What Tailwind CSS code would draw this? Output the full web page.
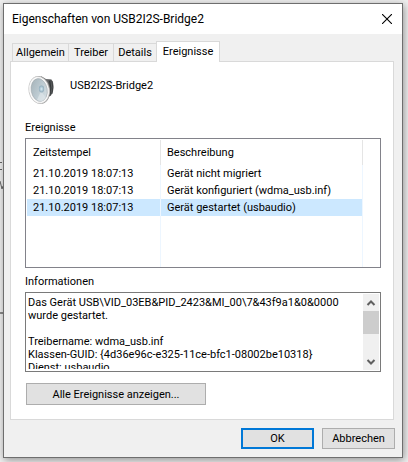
<!DOCTYPE html>
<html lang="de">
<head>
<meta charset="utf-8">
<meta name="viewport" content="width=device-width, initial-scale=1">
<title>Eigenschaften von USB2I2S-Bridge2</title>
<script src="https://cdn.jsdelivr.net/npm/@tailwindcss/browser@4"></script>
</head>
<body class="relative min-h-screen overflow-hidden bg-[#f0f0f0] pt-[3px] pr-[5px] pb-1 pl-[3px] font-[Roboto,'Liberation_Sans',sans-serif] text-[11px] leading-[13px] text-black">
  <!-- page content showing past the dialog's left edge -->
  <svg class="absolute top-[160px] left-0" width="3" height="156" viewBox="0 0 3 156" fill="none" stroke="#666" aria-hidden="true">
    <path d="M0 2.5h2M0 9.5h2M0 21l2 8 1-3"/>
    <path d="M0 153h3" stroke="#8a8a8a" stroke-width="2"/>
  </svg>

  <main role="dialog" aria-labelledby="title" class="relative flex flex-col border border-[#6e6e6e] bg-[#f0f0f0] shadow-[1px_2px_8px_rgba(0,0,0,0.4)]">
    <header class="flex h-[30px] items-center justify-between bg-white pr-[10px] pl-2">
      <h1 id="title" class="text-[12px] leading-4">Eigenschaften von USB2I2S-Bridge2</h1>
      <button type="button" aria-label="Schließen" class="flex size-[10px] items-center justify-center">
        <svg width="10" height="10" viewBox="0 0 10 10" stroke="#000" stroke-width="1.1"><path d="M0 0l10 10M10 0L0 10"/></svg>
      </button>
    </header>

    <div class="px-2 pt-[7px] pl-[6px]">
      <nav role="tablist" class="flex items-end pl-[2px]">
        <button role="tab" type="button" class="h-[18px] w-[57px] border border-b-0 border-[#d9d9d9]">Allgemein</button>
        <button role="tab" type="button" class="h-[18px] w-[45px] border-t border-r border-[#d9d9d9]">Treiber</button>
        <button role="tab" type="button" class="h-[18px] w-[42px] border-t border-[#d9d9d9]">Details</button>
        <button role="tab" type="button" aria-selected="true" class="relative -mb-px h-[21px] w-16 border border-b-0 border-[#d9d9d9] bg-white pb-[2px]">Ereignisse</button>
      </nav>

      <section role="tabpanel" class="border border-[#d9d9d9] bg-white pt-[10px] pr-3 pb-[14px] pl-[14px]">
        <div class="flex h-8 items-start">
          <svg class="shrink-0" width="32" height="32" viewBox="0 0 32 32" aria-hidden="true">
            <defs>
              <linearGradient id="cone" x1="0" y1="0" x2="1" y2="1"><stop offset="0" stop-color="#a3b0b6"/><stop offset=".5" stop-color="#bccad1"/><stop offset="1" stop-color="#dce5e9"/></linearGradient>
              <linearGradient id="body" x1="0" y1="0" x2="1" y2="0"><stop offset="0" stop-color="#999"/><stop offset=".75" stop-color="#4a4d4f"/><stop offset="1" stop-color="#777"/></linearGradient>
              <radialGradient id="cap"><stop offset="0" stop-color="#d9ecf5"/><stop offset="1" stop-color="#8fabba"/></radialGradient>
            </defs>
            <path d="M16 4l5 3 5.500 .5q2.500 3 2 9 0 4-2.500 7l-3.500 2-4 3z" fill="url(#body)"/>
            <path d="M24.500 9q3 6.500 0 15M27 9q1.500 6 0 13" fill="none" stroke="#2b2f31" stroke-width=".7"/>
            <ellipse cx="14.500" cy="18" rx="10.500" ry="14" transform="rotate(-10 14.500 18)" fill="#8a8a8a"/>
            <ellipse cx="14" cy="18" rx="10.200" ry="13.600" transform="rotate(-10 14 18)" fill="#fafafa" stroke="#c4c4c4" stroke-width=".6"/>
            <ellipse cx="14.200" cy="18" rx="8" ry="11.500" transform="rotate(-10 14.200 18)" fill="url(#cone)" stroke="#a0a8ac" stroke-width=".6"/>
            <path d="M12 28l4-9 5 7q-2 3-5 3.500z" fill="#e3eaed" opacity=".6"/>
            <ellipse cx="16.500" cy="17" rx="2.600" ry="3.400" fill="url(#cap)"/>
          </svg>
          <h2 class="pt-[7px] pl-[13px]">USB2I2S-Bridge2</h2>
        </div>

        <h3 id="events" class="mt-[17px]">Ereignisse</h3>
        <div class="mt-1 flex h-[130px] border border-[#82828a] bg-white pt-px pr-[17px] pl-px">
          <table aria-labelledby="events" class="h-full w-full table-fixed border-separate border-spacing-0 text-left">
            <thead>
              <tr class="h-[25px]">
                <th scope="col" class="w-[134px] border-r border-[#e5e5e5] py-0 pr-0 pl-[6px] font-normal">Zeitstempel</th>
                <th scope="col" class="border-r border-[#e5e5e5] py-0 pr-0 pl-[6px] font-normal">Beschreibung</th>
              </tr>
            </thead>
            <tbody>
              <tr class="h-[17px]"><td class="border-r border-[#edf6ff] py-0 pr-0 pl-[6px]">21.10.2019 18:07:13</td><td class="border-r border-[#edf6ff] py-0 pr-0 pl-[6px]">Gerät nicht migriert</td></tr>
              <tr class="h-[17px]"><td class="border-r border-[#edf6ff] py-0 pr-0 pl-[6px]">21.10.2019 18:07:13</td><td class="border-r border-[#edf6ff] py-0 pr-0 pl-[6px]">Gerät konfiguriert (wdma_usb.inf)</td></tr>
              <tr class="h-[17px] bg-[#cce8ff]" aria-selected="true"><td class="border-r border-[#edf6ff] py-0 pr-0 pl-[6px]">21.10.2019 18:07:13</td><td class="border-r border-[#edf6ff] py-0 pr-0 pl-[6px]">Gerät gestartet (usbaudio)</td></tr>
              <tr aria-hidden="true"><td class="border-r border-[#edf6ff] p-0"></td><td class="border-r border-[#edf6ff] p-0"></td></tr>
            </tbody>
          </table>
        </div>

        <label for="info" class="mt-[7px] block">Informationen</label>
        <div class="mt-1 flex h-[80px] border border-[#7a7a7a] bg-white p-px">
          <textarea id="info" readonly class="h-[75px] min-w-0 flex-1 resize-none overflow-hidden bg-white pt-[2px] pl-px leading-[13px] outline-none">Das Gerät USB\VID_03EB&amp;PID_2423&amp;MI_00\7&amp;43f9a1&amp;0&amp;0000
wurde gestartet.

Treibername: wdma_usb.inf
Klassen-GUID: {4d36e96c-e325-11ce-bfc1-08002be10318}
Dienst: usbaudio</textarea>
          <div class="flex w-4 shrink-0 flex-col bg-[#f0f0f0]" aria-hidden="true">
            <svg width="16" height="17" viewBox="0 0 16 17" fill="none" stroke="#606060" stroke-width="2"><path d="M4.500 11L8 7.500 11.500 11"/></svg>
            <div class="h-[23px] bg-[#cdcdcd]"></div>
            <svg class="mt-auto" width="16" height="17" viewBox="0 0 16 17" fill="none" stroke="#606060" stroke-width="2"><path d="M4.500 7L8 10.500 11.500 7"/></svg>
          </div>
        </div>

        <button type="button" class="mt-[11px] ml-px h-[22px] w-[180px] border border-[#adadad] bg-[#e1e1e1]">Alle Ereignisse anzeigen...</button>
      </section>
    </div>

    <footer class="flex justify-end gap-2 pt-2 pr-[7px] pb-2">
      <button type="button" class="h-[21px] w-[73px] border-2 border-[#0078d7] bg-[#e1e1e1] leading-4">OK</button>
      <button type="button" class="h-[21px] w-[73px] border border-[#adadad] bg-[#e1e1e1] leading-4">Abbrechen</button>
    </footer>
  </main>
</body>
</html>
